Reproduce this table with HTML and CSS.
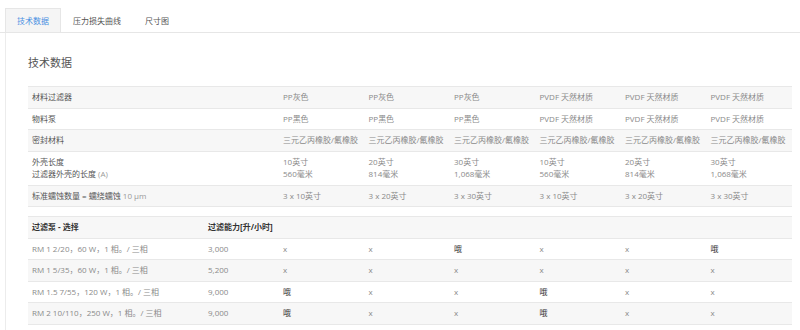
FILE: index.html
```html
<!DOCTYPE html>
<html lang="zh">
  <head>
    <meta charset="UTF-8" />
    <meta name="viewport" content="width=device-width, initial-scale=1.0" />
    <title>技术数据</title>
    <link rel="stylesheet" href="styles.css">
  </head>
  <body>
    <ul class="tabs">
      <li class="tab active">技术数据</li>
      <li class="tab">压力损失曲线</li>
      <li class="tab">尺寸图</li>
    </ul>

    <div class="panel">
      <h2 class="title">技术数据</h2>

      <table class="data specs">
        <colgroup>
          <col class="col-label">
          <col class="col-val"><col class="col-val"><col class="col-val">
          <col class="col-val"><col class="col-val"><col class="col-val">
        </colgroup>
        <tr>
          <td class="label">材料过滤器</td>
          <td>PP灰色</td><td>PP灰色</td><td>PP灰色</td>
          <td>PVDF 天然材质</td><td>PVDF 天然材质</td><td>PVDF 天然材质</td>
        </tr>
        <tr>
          <td class="label">物料泵</td>
          <td>PP黑色</td><td>PP黑色</td><td>PP黑色</td>
          <td>PVDF 天然材质</td><td>PVDF 天然材质</td><td>PVDF 天然材质</td>
        </tr>
        <tr>
          <td class="label">密封材料</td>
          <td>三元乙丙橡胶/氟橡胶</td><td>三元乙丙橡胶/氟橡胶</td><td>三元乙丙橡胶/氟橡胶</td>
          <td>三元乙丙橡胶/氟橡胶</td><td>三元乙丙橡胶/氟橡胶</td><td>三元乙丙橡胶/氟橡胶</td>
        </tr>
        <tr class="tall">
          <td class="label">外壳长度<br>过滤器外壳的长度 <span class="light">(A)</span></td>
          <td>10英寸<br>560毫米</td><td>20英寸<br>814毫米</td><td>30英寸<br>1,068毫米</td>
          <td>10英寸<br>560毫米</td><td>20英寸<br>814毫米</td><td>30英寸<br>1,068毫米</td>
        </tr>
        <tr>
          <td class="label">标准蠕蚀数量 = 蠕绕蠕蚀 <span class="light">10 µm</span></td>
          <td>3 x 10英寸</td><td>3 x 20英寸</td><td>3 x 30英寸</td>
          <td>3 x 10英寸</td><td>3 x 20英寸</td><td>3 x 30英寸</td>
        </tr>
      </table>

      <table class="data pumps">
        <colgroup>
          <col class="col-pump"><col class="col-cap">
          <col class="col-val"><col class="col-val"><col class="col-val">
          <col class="col-val"><col class="col-val"><col class="col-val">
        </colgroup>
        <tr class="head">
          <td>过滤泵 - 选择</td>
          <td>过滤能力[升/小时]</td>
          <td></td><td></td><td></td><td></td><td></td><td></td>
        </tr>
        <tr>
          <td>RM 1 2/20，60 W，1 相。/ 三相</td><td>3,000</td>
          <td>x</td><td>x</td><td class="yes">哦</td><td>x</td><td>x</td><td class="yes">哦</td>
        </tr>
        <tr>
          <td>RM 1 5/35，60 W，1 相。/ 三相</td><td>5,200</td>
          <td>x</td><td>x</td><td>x</td><td>x</td><td>x</td><td>x</td>
        </tr>
        <tr>
          <td>RM 1.5 7/55，120 W，1 相。/ 三相</td><td>9,000</td>
          <td class="yes">哦</td><td>x</td><td>x</td><td class="yes">哦</td><td>x</td><td>x</td>
        </tr>
        <tr>
          <td>RM 2 10/110，250 W，1 相。/ 三相</td><td>9,000</td>
          <td class="yes">哦</td><td>x</td><td>x</td><td class="yes">哦</td><td>x</td><td>x</td>
        </tr>
      </table>
    </div>
  </body>
</html>
```

FILE: styles.css
```css
body {
  margin: 0;
  padding-top: 8px;
  font-family: "Open Sans", "Noto Sans CJK SC", sans-serif;
  font-size: 8px;
  color: #8a8a8a;
  background-color: #fff;
  overflow: hidden;
}

.tabs {
  display: flex;
  margin: 0;
  padding: 0 0 0 5px;
  list-style: none;
  border-bottom: 1px solid #e6e6e6;
}

.tab {
  height: 23px;
  line-height: 23px;
  padding: 0 11px;
  color: #555;
  border: 1px solid transparent;
  border-bottom: none;
}

.tab.active {
  background-color: #f5f5f5;
  border-color: #e6e6e6;
  color: #4a90e2;
}

.panel {
  margin-left: 5px;
  border-left: 1px solid #ececec;
  padding: 22px 8px 20px 22px;
}

.title {
  margin: 0 0 16px;
  font-size: 11px;
  line-height: 15px;
  font-weight: 400;
  color: #555;
}

.data {
  width: 764px;
  border-collapse: collapse;
  table-layout: fixed;
}

.data td {
  height: 20.5px;
  padding: 0 4px;
  line-height: 12px;
  border-top: 1px solid #e8e8e8;
  white-space: nowrap;
  overflow: hidden;
  vertical-align: middle;
}

.data tr.tall td {
  height: 33px;
}

.data tr:last-child td {
  border-bottom: 1px solid #e8e8e8;
}

.data tr:nth-child(odd) td {
  background-color: #f7f7f7;
}

.specs {
  margin-bottom: 9px;
}

.col-label {
  width: 251px;
}

.col-val {
  width: 85.5px;
}

.col-pump {
  width: 176px;
}

.col-cap {
  width: 75px;
}

.label {
  color: #555;
}

.light {
  color: #999;
}

.head td {
  color: #333;
  font-weight: 700;
}

.yes {
  color: #333;
}
```
